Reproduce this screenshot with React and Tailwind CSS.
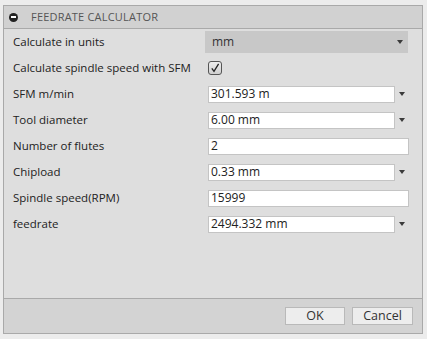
import React from 'react'

function Arrow() {
  return (
    <svg width="6" height="4" viewBox="0 0 6 4" className="shrink-0">
      <path d="M0 0 L6 0 L3 4 Z" fill="#3a3a3a" />
    </svg>
  )
}

function Row({ label, children }) {
  return (
    <div className="flex h-[26px] items-center pl-[9px]">
      <div className="w-[192px] shrink-0 text-[11.5px] text-[#222]">{label}</div>
      {children}
    </div>
  )
}

function DropInput({ value }) {
  return (
    <div className="flex items-center">
      <div className="ml-[3px] flex h-[17px] w-[187px] items-center border border-[#c4c4c4] bg-white pl-[2px] text-[12px] text-[#222]">
        {value}
      </div>
      <div className="ml-[3px] flex w-[8px] justify-center">
        <Arrow />
      </div>
    </div>
  )
}

function TextInput({ value }) {
  return (
    <div className="ml-[3px] flex h-[17px] w-[201px] items-center border border-[#c4c4c4] bg-white pl-[2px] text-[12px] text-[#222]">
      {value}
    </div>
  )
}

export default function App() {
  return (
    <div
      className="h-[339px] w-[427px] bg-[#ececec] pl-[3px] pt-[5px]"
      style={{ fontFamily: '"Open Sans", sans-serif' }}
    >
      <div className="flex h-[329px] w-[420px] flex-col border border-[#a9a9a9]">
        {/* Header */}
        <div className="flex h-[23px] shrink-0 items-center border-b border-[#a9a9a9] bg-[#d1d1d1] pl-[5px]">
          <div className="flex h-[9px] w-[9px] items-center justify-center rounded-full bg-[#222]">
            <div className="h-[2px] w-[5px] bg-white" />
          </div>
          <span className="ml-[13px] text-[11px] text-[#555] tracking-[0.2px]">FEEDRATE CALCULATOR</span>
        </div>

        {/* Body */}
        <div className="flex-1 bg-[#dedede]">
          <Row label="Calculate in units">
            <div className="flex h-[22px] w-[203px] items-center justify-between bg-[#c8c8c8] pl-[7px] pr-[5px] text-[12px] text-[#333]">
              <span>mm</span>
              <Arrow />
            </div>
          </Row>
          <Row label="Calculate spindle speed with SFM">
            <div className="ml-[3px] flex h-[14px] w-[14px] items-center justify-center rounded-[3px] border border-[#555] bg-gradient-to-b from-[#eeeeee] to-[#cfcfcf]">
              <svg width="10" height="10" viewBox="0 0 10 10">
                <path d="M1.8 5.3 L4 8.3 L8.6 0.8" fill="none" stroke="#222" strokeWidth="1.3" />
              </svg>
            </div>
          </Row>
          <Row label="SFM m/min">
            <DropInput value="301.593 m" />
          </Row>
          <Row label="Tool diameter">
            <DropInput value="6.00 mm" />
          </Row>
          <Row label="Number of flutes">
            <TextInput value="2" />
          </Row>
          <Row label="Chipload">
            <DropInput value="0.33 mm" />
          </Row>
          <Row label="Spindle speed(RPM)">
            <TextInput value="15999" />
          </Row>
          <Row label="feedrate">
            <DropInput value="2494.332 mm" />
          </Row>
        </div>

        {/* Footer */}
        <div className="flex h-[35px] shrink-0 items-start justify-end gap-[7px] border-t border-[#a9a9a9] bg-[#d3d3d3] pr-[9px] pt-[8px]">
          <button className="h-[18px] w-[60px] border border-[#b9b9b9] bg-[#ededed] text-[12.5px] leading-none text-[#333]">
            OK
          </button>
          <button className="h-[18px] w-[61px] border border-[#b9b9b9] bg-[#ededed] text-[12.5px] leading-none text-[#333]">
            Cancel
          </button>
        </div>
      </div>
    </div>
  )
}
